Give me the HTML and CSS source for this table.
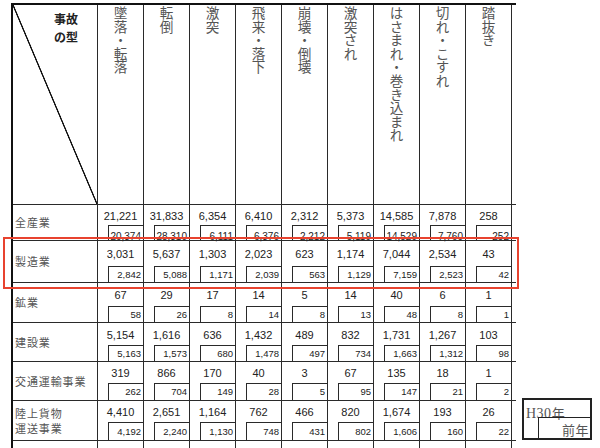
FILE: index.html
```html
<!DOCTYPE html>
<html lang="ja">
<head>
<meta charset="utf-8">
<title>事故の型別 死傷者数</title>
<link rel="stylesheet" href="styles.css">
</head>
<body>
<div class="page">
  <div class="grid">
    <div class="row hdr">
      <div class="cell corner"><div class="corner-text"><div>事故</div><div>の型</div></div></div>
      <div class="cell vh"><span>墜落・転落</span></div>
      <div class="cell vh"><span>転倒</span></div>
      <div class="cell vh"><span>激突</span></div>
      <div class="cell vh"><span>飛来・落下</span></div>
      <div class="cell vh"><span>崩壊・倒壊</span></div>
      <div class="cell vh"><span>激突され</span></div>
      <div class="cell vh"><span>はさまれ・巻き込まれ</span></div>
      <div class="cell vh"><span>切れ・こすれ</span></div>
      <div class="cell vh"><span>踏抜き</span></div>
    </div>

    <div class="row r-zen">
      <div class="cell lbl">全産業</div>
      <div class="cell num"><div class="cur">21,221</div><div class="prev"><span>20,374</span></div></div>
      <div class="cell num"><div class="cur">31,833</div><div class="prev"><span>28,310</span></div></div>
      <div class="cell num"><div class="cur">6,354</div><div class="prev"><span>6,111</span></div></div>
      <div class="cell num"><div class="cur">6,410</div><div class="prev"><span>6,376</span></div></div>
      <div class="cell num"><div class="cur">2,312</div><div class="prev"><span>2,212</span></div></div>
      <div class="cell num"><div class="cur">5,373</div><div class="prev"><span>5,119</span></div></div>
      <div class="cell num"><div class="cur">14,585</div><div class="prev"><span>14,529</span></div></div>
      <div class="cell num"><div class="cur">7,878</div><div class="prev"><span>7,760</span></div></div>
      <div class="cell num"><div class="cur">258</div><div class="prev"><span>252</span></div></div>
    </div>

    <div class="row r-sei">
      <div class="cell lbl">製造業</div>
      <div class="cell num"><div class="cur">3,031</div><div class="prev"><span>2,842</span></div></div>
      <div class="cell num"><div class="cur">5,637</div><div class="prev"><span>5,088</span></div></div>
      <div class="cell num"><div class="cur">1,303</div><div class="prev"><span>1,171</span></div></div>
      <div class="cell num"><div class="cur">2,023</div><div class="prev"><span>2,039</span></div></div>
      <div class="cell num"><div class="cur">623</div><div class="prev"><span>563</span></div></div>
      <div class="cell num"><div class="cur">1,174</div><div class="prev"><span>1,129</span></div></div>
      <div class="cell num"><div class="cur">7,044</div><div class="prev"><span>7,159</span></div></div>
      <div class="cell num"><div class="cur">2,534</div><div class="prev"><span>2,523</span></div></div>
      <div class="cell num"><div class="cur">43</div><div class="prev"><span>42</span></div></div>
    </div>

    <div class="row r-kou">
      <div class="cell lbl">鉱業</div>
      <div class="cell num"><div class="cur">67</div><div class="prev"><span>58</span></div></div>
      <div class="cell num"><div class="cur">29</div><div class="prev"><span>26</span></div></div>
      <div class="cell num"><div class="cur">17</div><div class="prev"><span>8</span></div></div>
      <div class="cell num"><div class="cur">14</div><div class="prev"><span>14</span></div></div>
      <div class="cell num"><div class="cur">5</div><div class="prev"><span>8</span></div></div>
      <div class="cell num"><div class="cur">14</div><div class="prev"><span>13</span></div></div>
      <div class="cell num"><div class="cur">40</div><div class="prev"><span>48</span></div></div>
      <div class="cell num"><div class="cur">6</div><div class="prev"><span>8</span></div></div>
      <div class="cell num"><div class="cur">1</div><div class="prev"><span>1</span></div></div>
    </div>

    <div class="row r-ken">
      <div class="cell lbl">建設業</div>
      <div class="cell num"><div class="cur">5,154</div><div class="prev"><span>5,163</span></div></div>
      <div class="cell num"><div class="cur">1,616</div><div class="prev"><span>1,573</span></div></div>
      <div class="cell num"><div class="cur">636</div><div class="prev"><span>680</span></div></div>
      <div class="cell num"><div class="cur">1,432</div><div class="prev"><span>1,478</span></div></div>
      <div class="cell num"><div class="cur">489</div><div class="prev"><span>497</span></div></div>
      <div class="cell num"><div class="cur">832</div><div class="prev"><span>734</span></div></div>
      <div class="cell num"><div class="cur">1,731</div><div class="prev"><span>1,663</span></div></div>
      <div class="cell num"><div class="cur">1,267</div><div class="prev"><span>1,312</span></div></div>
      <div class="cell num"><div class="cur">103</div><div class="prev"><span>98</span></div></div>
    </div>

    <div class="row r-kot">
      <div class="cell lbl">交通運輸事業</div>
      <div class="cell num"><div class="cur">319</div><div class="prev"><span>262</span></div></div>
      <div class="cell num"><div class="cur">866</div><div class="prev"><span>704</span></div></div>
      <div class="cell num"><div class="cur">170</div><div class="prev"><span>149</span></div></div>
      <div class="cell num"><div class="cur">40</div><div class="prev"><span>28</span></div></div>
      <div class="cell num"><div class="cur">3</div><div class="prev"><span>5</span></div></div>
      <div class="cell num"><div class="cur">67</div><div class="prev"><span>95</span></div></div>
      <div class="cell num"><div class="cur">135</div><div class="prev"><span>147</span></div></div>
      <div class="cell num"><div class="cur">18</div><div class="prev"><span>21</span></div></div>
      <div class="cell num"><div class="cur">1</div><div class="prev"><span>2</span></div></div>
    </div>

    <div class="row r-riku">
      <div class="cell lbl"><div>陸上貨物</div><div>運送事業</div></div>
      <div class="cell num"><div class="cur">4,410</div><div class="prev"><span>4,192</span></div></div>
      <div class="cell num"><div class="cur">2,651</div><div class="prev"><span>2,240</span></div></div>
      <div class="cell num"><div class="cur">1,164</div><div class="prev"><span>1,130</span></div></div>
      <div class="cell num"><div class="cur">762</div><div class="prev"><span>748</span></div></div>
      <div class="cell num"><div class="cur">466</div><div class="prev"><span>431</span></div></div>
      <div class="cell num"><div class="cur">820</div><div class="prev"><span>802</span></div></div>
      <div class="cell num"><div class="cur">1,674</div><div class="prev"><span>1,606</span></div></div>
      <div class="cell num"><div class="cur">193</div><div class="prev"><span>160</span></div></div>
      <div class="cell num"><div class="cur">26</div><div class="prev"><span>22</span></div></div>
    </div>

    <div class="row r-next">
      <div class="cell"></div>
      <div class="cell"></div>
      <div class="cell"></div>
      <div class="cell"></div>
      <div class="cell"></div>
      <div class="cell"></div>
      <div class="cell"></div>
      <div class="cell"></div>
      <div class="cell"></div>
      <div class="cell"></div>
    </div>
  </div>

  <div class="legend">
    <div class="lg-top"><span class="lat">H30</span>年</div>
    <div class="lg-bot">前年</div>
  </div>
</div>
<div class="highlight"></div>
</body>
</html>
```
FILE: styles.css
```css
html, body {
  margin: 0;
  padding: 0;
  background: #ffffff;
}

body {
  width: 600px;
  height: 448px;
  overflow: hidden;
  font-family: "Noto Sans CJK JP", "Noto Sans", sans-serif;
  color: #333;
}

.page {
  display: flex;
  align-items: flex-start;
  padding: 3px 0 0 11px;
}

.grid {
  display: grid;
  grid-template-columns: 85px repeat(9, 46px);
  grid-template-rows: 200px 36px 42px 40px 39px 39px 40px 7px;
  border-left: 2px solid #111;
  border-top: 2px solid #111;
  position: relative;
}

.row {
  display: contents;
}

.cell {
  box-sizing: border-box;
  border-right: 1px solid #2a2a2a;
  border-bottom: 1px solid #2a2a2a;
  min-width: 0;
  position: relative;
}

.r-next .cell {
  border-bottom: none;
}

/* row lines run a little past the right edge */
.row > .cell:last-child::after {
  content: "";
  position: absolute;
  right: -5px;
  bottom: -1px;
  width: 5px;
  height: 1px;
  background: #2a2a2a;
}

.r-next > .cell:last-child::after {
  display: none;
}

.hdr > .cell:last-child::before {
  content: "";
  position: absolute;
  right: -5px;
  top: -2px;
  width: 5px;
  height: 2px;
  background: #111;
}

/* header */
.corner {
  background: linear-gradient(to top right,
    transparent calc(50% - 1px),
    #111 calc(50% - 0.4px),
    #111 calc(50% + 0.4px),
    transparent calc(50% + 1px));
}

.corner-text {
  padding: 5px 0 0 41px;
  font-size: 12px;
  line-height: 17.5px;
  font-weight: 700;
  color: #222;
}

.vh {
  display: flex;
  justify-content: center;
  align-items: flex-start;
  padding-top: 1px;
}

.vh span {
  writing-mode: vertical-rl;
  text-orientation: upright;
  font-size: 13.6px;
  line-height: 16px;
  color: #555;
}

/* row labels */
.lbl {
  display: flex;
  flex-direction: column;
  justify-content: center;
  padding-left: 2px;
  font-size: 11px;
  line-height: 15px;
  letter-spacing: 0.9px;
  color: #555;
}

/* number cells */
.num {
  display: flex;
  flex-direction: column;
  font-family: "Liberation Sans", Arial, sans-serif;
}

.cur {
  flex: 1;
  display: flex;
  align-items: center;
  justify-content: center;
  font-size: 11px;
  line-height: 13px;
  color: #222;
  padding-top: 2px;
}

.prev {
  margin-left: 10px;
  height: 16px;
  box-sizing: border-box;
  border-left: 1px solid #2a2a2a;
  border-top: 1px solid #2a2a2a;
  display: flex;
  align-items: center;
  justify-content: flex-end;
  padding-right: 2px;
  font-size: 9.5px;
  line-height: 10px;
  color: #222;
}

.r-zen .prev {
  height: 15px;
  align-items: flex-end;
  font-size: 10px;
}

.r-zen .prev span {
  margin-bottom: -2px;
}

.r-kot .prev {
  height: 17px;
}

.r-riku .prev {
  height: 18px;
}

/* legend */
.legend {
  margin: 395px 0 0 10px;
  width: 70px;
  height: 42px;
  box-sizing: border-box;
  border: 2px solid #222;
  display: flex;
  flex-direction: column;
  font-size: 13px;
  line-height: 15px;
  color: #555;
}

.lg-top {
  padding: 5px 0 0 2px;
  height: 17px;
  box-sizing: border-box;
  letter-spacing: 0.5px;
}

.lat {
  font-family: "Liberation Serif", "Times New Roman", serif;
  font-size: 14px;
}

.lg-bot {
  flex: 1;
  margin-left: 14px;
  border-left: 1px solid #222;
  border-top: 1px solid #222;
  display: flex;
  align-items: flex-end;
  justify-content: flex-end;
  padding: 0 1px 1px 0;
  letter-spacing: 0.5px;
}

/* red annotation frame */
.highlight {
  position: absolute;
  left: 3px;
  top: 237px;
  width: 516px;
  height: 52px;
  box-sizing: border-box;
  border: 2px solid #e8432f;
  pointer-events: none;
}
```
